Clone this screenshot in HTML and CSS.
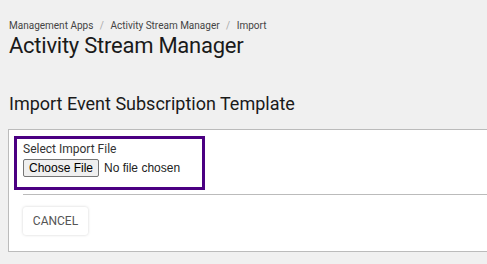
FILE: index.html
```html
<!DOCTYPE html>
<html lang="en">
<head>
    <meta charset="UTF-8">
    <title>Import</title>
    <link rel="stylesheet" href="styles.css">
</head>
<body>
    <div class="page">
        <div class="breadcrumb">
            <a href="#">Management Apps</a>
            <span class="sep">/</span>
            <a href="#">Activity Stream Manager</a>
            <span class="sep">/</span>
            <span>Import</span>
        </div>
        <h1>Activity Stream Manager</h1>
        <h2>Import Event Subscription Template</h2>
        <div class="panel">
            <div class="panel-body">
                <div class="upload">
                    <label for="file">Select Import File</label>
                    <input type="file" id="file">
                </div>
            </div>
            <div class="panel-footer">
                <button class="cancel">CANCEL</button>
            </div>
        </div>
    </div>
</body>
</html>
```
FILE: styles.css
```css
body {
    margin: 0;
    background-color: #f0f0f0;
    font-family: Roboto, "Liberation Sans", sans-serif;
    color: #1a1a1a;
}

.page {
    padding: 20px 0 0 8px;
}

/* breadcrumb */
.breadcrumb {
    font-size: 10px;
    color: #444;
    padding-left: 1px;
    line-height: 12px;
}
.breadcrumb a {
    color: #444;
    text-decoration: none;
}
.breadcrumb .sep {
    color: #aaa;
    margin: 0 4px;
}

h1 {
    font-size: 22px;
    font-weight: 400;
    letter-spacing: -0.25px;
    margin: 1px 0 0 1px;
    line-height: 26px;
}

h2 {
    font-size: 18px;
    font-weight: 400;
    margin: 34px 0 0 1px;
    line-height: 22px;
}

/* panel */
.panel {
    margin-top: 14px;
    background: #fff;
    border: 1px solid #bbb;
    border-right: none;
    height: 121px;
}

.panel-body {
    padding: 6px 0 0 5px;
}

.upload {
    width: 179px;
    border: 3px solid #4b0082;
    padding: 3px 0 10px 6px;
    display: flex;
    flex-direction: column;
    align-items: flex-start;
    gap: 3px;
}
.upload label {
    font-size: 12px;
    color: #333;
    line-height: 14px;
}
.upload input {
    font-family: "Liberation Sans", Arial, sans-serif;
    font-size: 12px;
    color: #222;
}
.upload input::file-selector-button {
    font-family: "Liberation Sans", Arial, sans-serif;
    font-size: 12px;
    height: 18px;
    padding: 0 5px;
    margin-right: 5px;
    background: #efefef;
    border: 1px solid #767676;
    border-radius: 2px;
    color: #000;
}

.panel-footer {
    margin: 4px 0 0 14px;
    border-top: 1px solid #bbb;
    padding-top: 12px;
}

.cancel {
    background: #fff;
    border: none;
    border-radius: 3px;
    box-shadow: 0 0 3px rgba(0, 0, 0, 0.18);
    width: 65px;
    height: 28px;
    font-family: Roboto, "Liberation Sans", sans-serif;
    font-size: 12px;
    color: #555;
}
```
